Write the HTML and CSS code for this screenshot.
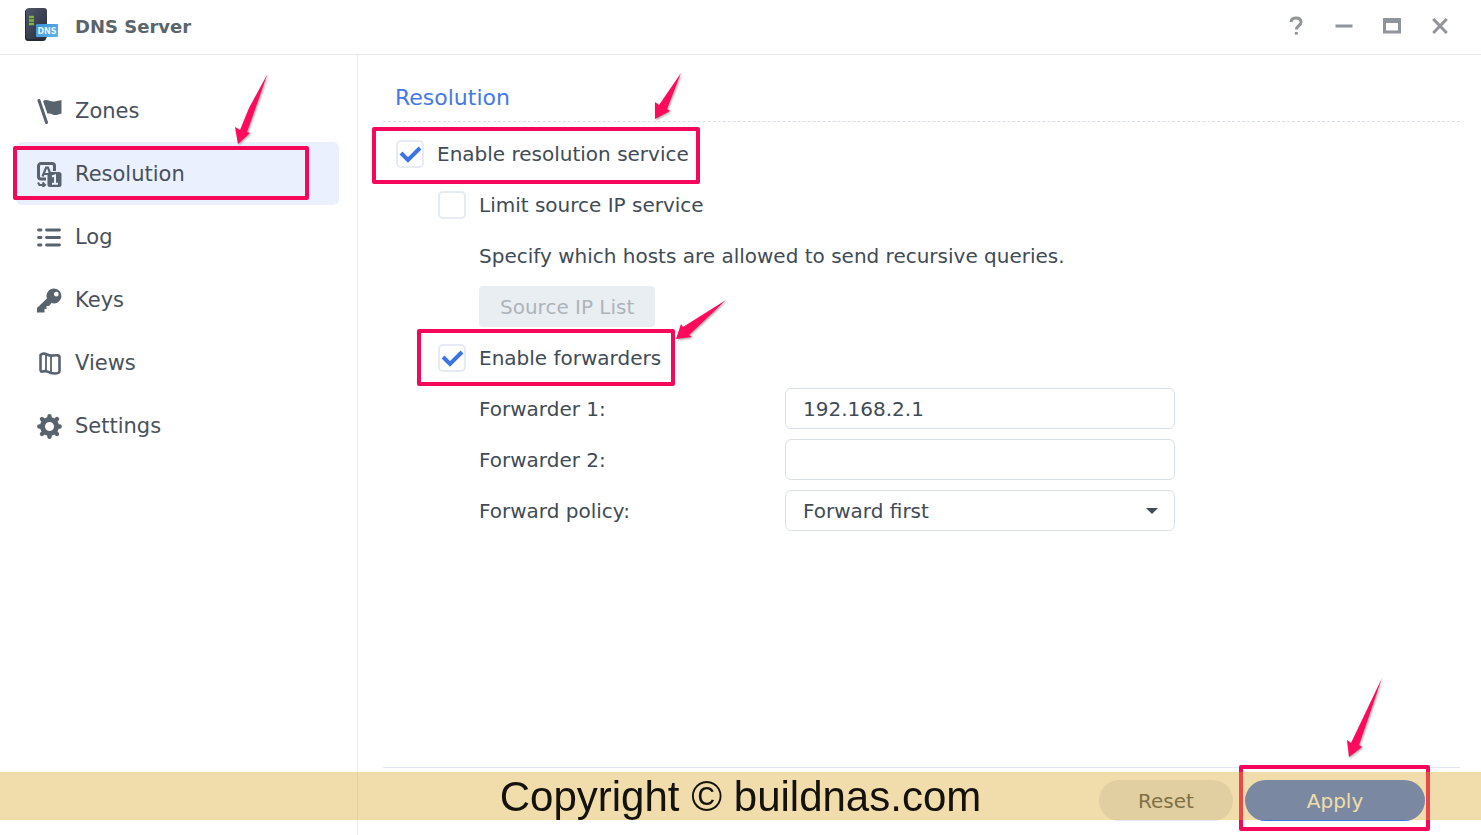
FILE: index.html
```html
<!DOCTYPE html>
<html lang="en">
<head>
  <meta charset="UTF-8" />
  <title>DNS Server</title>
  <link rel="stylesheet" href="styles.css">
</head>
<body>
  <div class="window">
    <header class="titlebar">
      <svg class="app-icon" viewBox="0 0 36 36" aria-hidden="true">
        <defs>
          <linearGradient id="tower" x1="0" y1="0" x2="1" y2="1">
            <stop offset="0" stop-color="#50576a" />
            <stop offset="1" stop-color="#272d3b" />
          </linearGradient>
          <linearGradient id="badge" x1="0" y1="0" x2="1" y2="1">
            <stop offset="0" stop-color="#3a93d8" />
            <stop offset="1" stop-color="#62b5ee" />
          </linearGradient>
        </defs>
        <rect x="2" y="1" width="21" height="32" rx="3" fill="#252a37" />
        <rect x="3" y="0" width="21" height="31" rx="3" fill="url(#tower)" />
        <path d="M6 9h5M6 12.500h5M6 16h5" stroke="#7fb53a" stroke-width="2.400" />
        <rect x="13" y="16" width="22" height="13" rx="1" fill="url(#badge)" />
        <text class="app-icon-text" x="24" y="26" text-anchor="middle">DNS</text>
      </svg>
      <h1>DNS Server</h1>
      <div class="window-buttons">
        <button type="button" aria-label="Help">
          <svg viewBox="0 0 20 20"><path d="M5 6.2C5.2 3.6 7 2.1 10 2.1c3 0 5 1.6 5 4.1 0 3.6-4.6 3.4-4.6 7.2" /><path d="M10.300 16v2.600" /></svg>
        </button>
        <button type="button" aria-label="Minimize">
          <svg viewBox="0 0 20 20"><path d="M1.500 10h17" /></svg>
        </button>
        <button type="button" aria-label="Maximize">
          <svg viewBox="0 0 20 20"><path d="M2.500 3.500h15v12.500h-15z" /><path d="M2 5.500h16" /></svg>
        </button>
        <button type="button" aria-label="Close">
          <svg viewBox="0 0 20 20"><path d="M3.200 3l13.600 14M16.800 3L3.200 17" /></svg>
        </button>
      </div>
    </header>

    <div class="body">
      <nav class="sidebar">
        <a href="#" class="nav-item">
          <svg viewBox="0 0 25 25"><path d="M2 1.500l7.500 22" fill="none" stroke="currentColor" stroke-width="3" stroke-linecap="round" /><path d="M6 2c4-2.500 7 1 11 .5 3-.3 5-1 7.500-1.500v13.500c-3 1-6 2.300-9 1-2-.8-3-1.300-5-.8z" fill="currentColor" /></svg>
          Zones
        </a>
        <a href="#" class="nav-item active">
          <svg viewBox="0 0 25 25">
            <path d="M9 17H4a2.500 2.500 0 0 1-2.500-2.500V4A2.500 2.500 0 0 1 4 1.500h11A2.500 2.500 0 0 1 17.500 4v5" fill="none" stroke="currentColor" stroke-width="3" />
            <path d="M5.500 14.500l3.600-9h1.800l2 5M7 12h4" fill="none" stroke="currentColor" stroke-width="2.200" />
            <rect x="10.500" y="10" width="14" height="15" rx="2.500" fill="currentColor" />
            <path d="M15 14.500l3-1v8M15 21.800h6" fill="none" stroke="#ebf0fe" stroke-width="2" />
            <path d="M1 20.500l1.500 2.500h5.500M5.500 20.500L8 23l-2.500 2" fill="none" stroke="currentColor" stroke-width="2" />
          </svg>
          Resolution
          <span class="mark mark-nav"></span>
          <svg class="arrow arrow-nav" viewBox="0 0 34 74"><path d="M32.500 2L12 60l3 1L3 72 0 55l5 3 9-22z" /></svg>
        </a>
        <a href="#" class="nav-item">
          <svg viewBox="0 0 25 25"><path d="M1.500 5h2.500M1.500 12.500h2.500M1.500 20h2.500M9.500 5h13M9.500 12.500h13M9.500 20h13" fill="none" stroke="currentColor" stroke-width="2.800" stroke-linecap="round" /></svg>
          Log
        </a>
        <a href="#" class="nav-item">
          <svg viewBox="0 0 25 25"><path fill-rule="evenodd" fill="currentColor" d="M17 .5a7.500 7.500 0 1 1-2.500 14.600L12 18H9.500v3H7.500v3.500H0V20l9.900-9.600A7.500 7.500 0 0 1 17 .5zm2.300 3.300a2.400 2.400 0 1 0 0 4.800 2.400 2.400 0 0 0 0-4.800z" /></svg>
          Keys
        </a>
        <a href="#" class="nav-item">
          <svg viewBox="0 0 25 25"><path d="M3.500 4c2-2 4.500-1.500 6.500-.5s3.500 1.300 6 1c3.500-.3 6.500-.5 6.500 1.500v14c0 2-2 2.500-5 2.500s-5.500-1-7-1.800-3-.8-5-.2c-1.500.4-2-.5-2-2z" fill="none" stroke="currentColor" stroke-width="2.600" stroke-linejoin="round" /><path d="M9 3.500V20M14 5v16.500" fill="none" stroke="currentColor" stroke-width="1.800" /></svg>
          Views
        </a>
        <a href="#" class="nav-item">
          <svg viewBox="0 0 25 25">
            <circle cx="12.500" cy="12.500" r="7" fill="none" stroke="currentColor" stroke-width="5" />
            <path d="M12.500 2.300v3M12.500 20v2.700M2.300 12.500h3M20 12.500h2.700M5 5l2 2M18 18l2 2M20 5l-2 2M7 18l-2 2" stroke="currentColor" stroke-width="4.400" stroke-linecap="round" />
          </svg>
          Settings
        </a>
      </nav>

      <main class="content">
        <h2>Resolution</h2>

        <form class="form">
          <div class="row">
            <input type="checkbox" id="resolution" checked>
            <label for="resolution">Enable resolution service</label>
            <span class="mark mark-resolution"></span>
            <svg class="arrow arrow-resolution" viewBox="0 0 30 50"><path d="M28 1L14 37l3 2L2 47V30l4 3z" /></svg>
          </div>
          <div class="row sub">
            <input type="checkbox" id="limit">
            <label for="limit">Limit source IP service</label>
          </div>
          <div class="row inner">
            <p>Specify which hosts are allowed to send recursive queries.</p>
          </div>
          <div class="row inner">
            <button type="button" class="source-btn" disabled>Source IP List</button>
          </div>
          <div class="row sub">
            <input type="checkbox" id="forwarders" checked>
            <label for="forwarders">Enable forwarders</label>
            <span class="mark mark-forwarders"></span>
            <svg class="arrow arrow-forwarders" viewBox="0 0 54 44"><path d="M52 2L15 37l3 2-16 2L7 26l2 3z" /></svg>
          </div>
          <div class="row inner">
            <label class="field-label" for="forwarder1">Forwarder 1:</label>
            <input type="text" class="field" id="forwarder1" value="192.168.2.1">
          </div>
          <div class="row inner">
            <label class="field-label" for="forwarder2">Forwarder 2:</label>
            <input type="text" class="field" id="forwarder2">
          </div>
          <div class="row inner">
            <label class="field-label" for="policy">Forward policy:</label>
            <select class="field" id="policy">
              <option>Forward first</option>
            </select>
          </div>
        </form>

        <footer class="actions">
          <button type="button" class="btn">Reset</button>
          <div class="apply-wrap">
            <button type="button" class="btn btn-apply">Apply</button>
            <span class="mark mark-apply"></span>
            <svg class="arrow arrow-apply" viewBox="0 0 38 82"><path d="M35 1L12 68l3 2L2 80 0 63l4 3z" /></svg>
          </div>
        </footer>
      </main>
    </div>
  </div>

  <div class="watermark">Copyright © buildnas.com</div>
</body>
</html>
```

FILE: styles.css
```css
* {
  box-sizing: border-box;
}

body {
  margin: 0;
  font-family: "DejaVu Sans", Verdana, sans-serif;
  font-size: 20px;
  color: #414b55;
  background: #fff;
}

h1, h2, p {
  margin: 0;
}

button, input, select {
  font: inherit;
  color: inherit;
}

.window {
  display: flex;
  flex-direction: column;
  min-height: 100vh;
}

/* title bar */
.titlebar {
  display: flex;
  align-items: center;
  height: 55px;
  padding: 0 30px 2px 23px;
  border-bottom: 1px solid #e8eaee;
}

.app-icon {
  width: 36px;
  height: 36px;
  margin-right: 16px;
}

.app-icon-text {
  font-size: 8px;
  font-weight: bold;
  fill: #e2f3ff;
}

.titlebar h1 {
  font-size: 18px;
  color: #5b636b;
}

.window-buttons {
  display: flex;
  gap: 26px;
  margin-left: auto;
}

.window-buttons button {
  display: flex;
  width: 22px;
  height: 22px;
  padding: 1px;
  border: 0;
  background: none;
}

.window-buttons svg {
  width: 20px;
  height: 20px;
  fill: none;
  stroke: #8f959b;
  stroke-width: 3;
}

.body {
  display: flex;
  flex: 1;
}

/* sidebar */
.sidebar {
  flex: 0 0 358px;
  padding: 24px 18px 0 16px;
  border-right: 1px solid #e8eaee;
}

.nav-item {
  position: relative;
  display: flex;
  align-items: center;
  gap: 13px;
  height: 63px;
  padding: 1px 0 0 21px;
  border-radius: 6px;
  font-size: 21px;
  color: #48515b;
  text-decoration: none;
}

.nav-item > svg:first-child {
  width: 25px;
  height: 25px;
  color: #59636e;
}

.nav-item.active {
  background: #ebf0fe;
}

/* content */
.content {
  display: flex;
  flex-direction: column;
  flex: 1;
  padding: 0 21px 0 25px;
}

.content h2 {
  height: 67px;
  padding: 29px 12px 0;
  border-bottom: 1px dashed #d8dee3;
  font-size: 22px;
  font-weight: normal;
  line-height: 28px;
  color: #4479e6;
}

.form {
  flex: 1;
  padding: 6px 12px 0;
}

.row {
  position: relative;
  display: flex;
  align-items: center;
  height: 51px;
}

.sub {
  margin-left: 42px;
}

.inner {
  margin-left: 84px;
}

input[type="checkbox"] {
  appearance: none;
  width: 28px;
  height: 28px;
  margin: 0 13px 0 1px;
  border: 2px solid #e6eaf3;
  border-radius: 5px;
  background: #fff center / 24px 24px no-repeat;
}

input[type="checkbox"]:checked {
  background-image: url("data:image/svg+xml,%3Csvg xmlns='http://www.w3.org/2000/svg' viewBox='0 0 24 24'%3E%3Cpath d='M3 11l7 7L22 6' fill='none' stroke='%233c73e6' stroke-width='4'/%3E%3C/svg%3E");
}

.source-btn {
  height: 41px;
  padding: 0 21px;
  border: 0;
  border-radius: 4px;
  background: #e9eef2;
  color: #adb4ba;
}

.field-label {
  width: 306px;
}

.field {
  width: 390px;
  height: 41px;
  padding: 0 17px;
  border: 1px solid #dadfe6;
  border-radius: 6px;
  background: #fff;
}

select.field {
  appearance: none;
  background: #fff right 15px center / 14px 8px no-repeat url("data:image/svg+xml,%3Csvg xmlns='http://www.w3.org/2000/svg' viewBox='0 0 14 8'%3E%3Cpath d='M1 1h12L7 7z' fill='%23414b55'/%3E%3C/svg%3E");
}

/* bottom buttons */
.actions {
  display: flex;
  justify-content: flex-end;
  gap: 12px;
  padding: 12px 35px 14px;
  border-top: 1px solid #e1e6f0;
}

.btn {
  width: 134px;
  height: 41px;
  border: 0;
  border-radius: 21px;
  background: #e6eaee;
  color: #414b55;
}

.btn-apply {
  width: 180px;
  background: #3976ee;
  color: #fff;
}

.apply-wrap {
  position: relative;
}

/* red frames and arrows */
.mark {
  position: absolute;
  border: 4px solid #f5085a;
  border-radius: 2px;
  pointer-events: none;
}

.mark-nav {
  top: 4px;
  left: -3px;
  right: 30px;
  bottom: 5px;
}

.mark-resolution {
  top: -1px;
  left: -23px;
  width: 328px;
  height: 57px;
}

.mark-forwarders {
  top: -3px;
  left: -20px;
  width: 258px;
  height: 57px;
}

.mark-apply {
  inset: -15px -5px -10px -6px;
}

.arrow {
  position: absolute;
  fill: #ff0a5c;
  filter: drop-shadow(1px 1px 1px rgba(0, 0, 0, 0.4));
  pointer-events: none;
}

.arrow-nav {
  top: -70px;
  left: 219px;
  width: 34px;
  height: 74px;
}

.arrow-resolution {
  top: -56px;
  left: 258px;
  width: 30px;
  height: 50px;
}

.arrow-forwarders {
  top: -34px;
  left: 237px;
  width: 54px;
  height: 44px;
}

.arrow-apply {
  top: -103px;
  left: 102px;
  width: 38px;
  height: 82px;
}

/* copyright strip over the page */
.watermark {
  position: fixed;
  left: 0;
  right: 0;
  bottom: 15px;
  height: 48px;
  overflow: hidden;
  background: rgba(220, 168, 45, 0.4);
  font-family: "Liberation Sans", Arial, sans-serif;
  font-size: 42px;
  line-height: 50px;
  text-align: center;
  color: #15120c;
  pointer-events: none;
}
```
